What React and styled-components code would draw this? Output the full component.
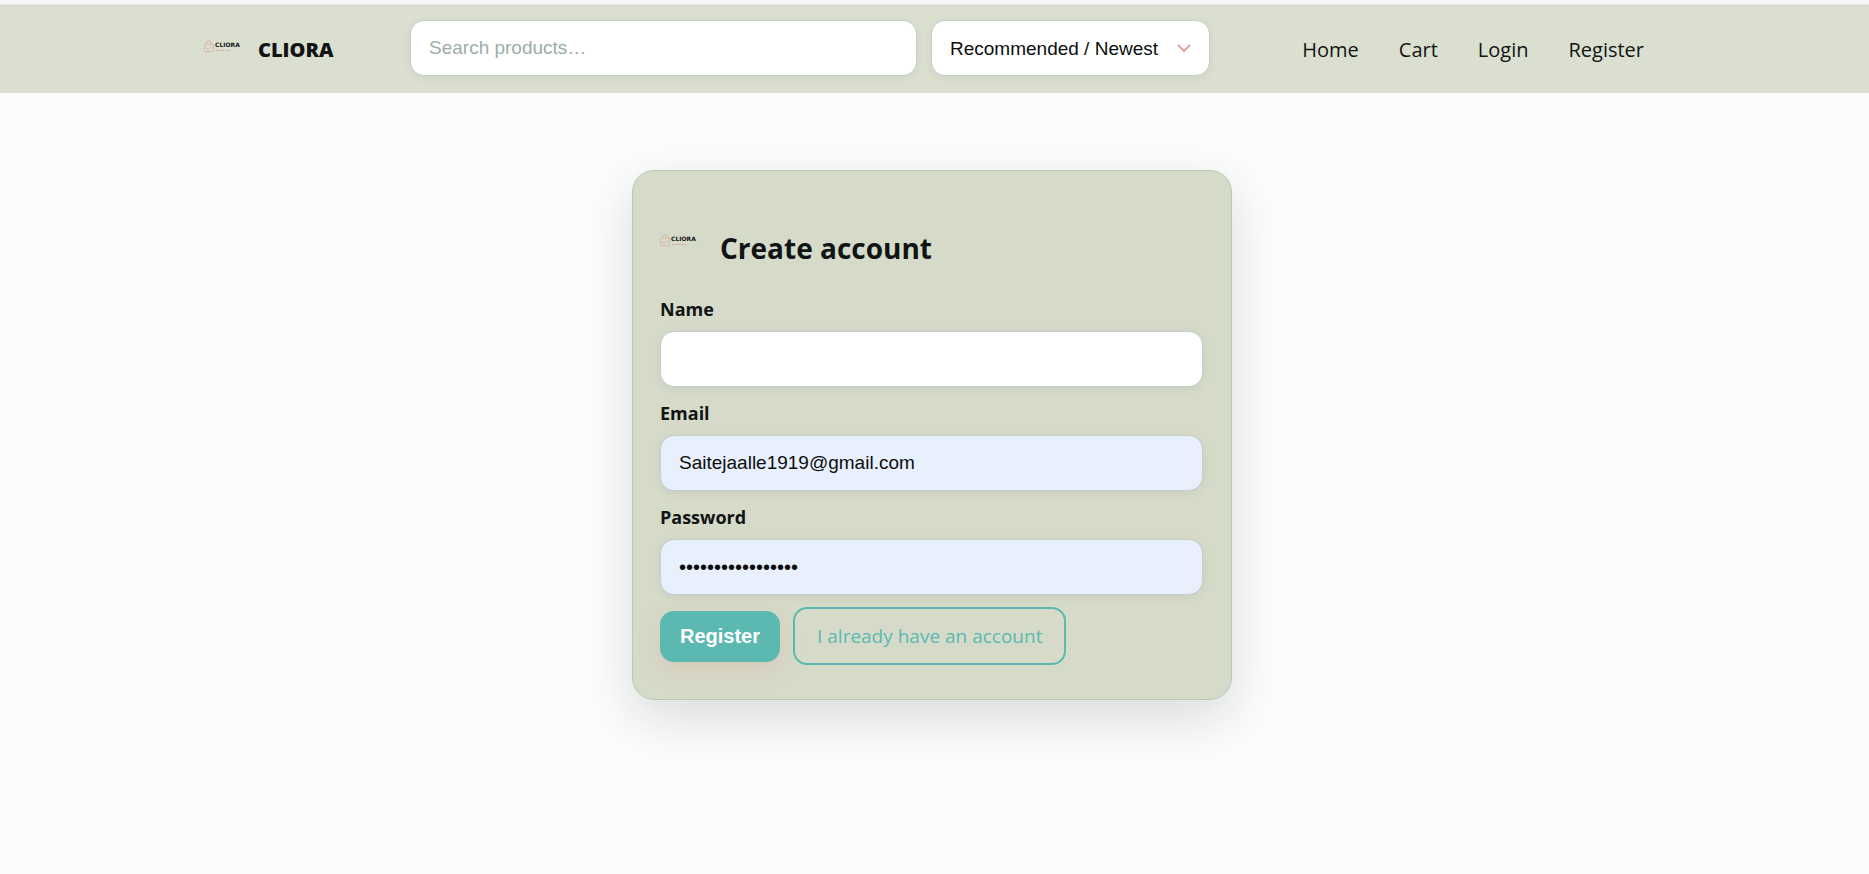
import React from 'react';
import styled, { createGlobalStyle, css } from 'styled-components';

const GlobalStyle = createGlobalStyle`
  *, *::before, *::after { box-sizing: border-box; }
  body {
    margin: 0;
    background: #fbfdfc;
    color: #111414;
    font-family: "Segoe UI", "Open Sans", "Noto Sans", sans-serif;
    font-size: 19px;
    line-height: 28px;
  }
`;

const Page = styled.div`
  min-height: 100vh;
  border-top: 4px solid #f5f6f6;
`;

const Header = styled.header`
  background: #dbdfd0;
  border-top: 1px solid #e6e7e4;
  padding: 15px 5px 17px 0;
`;

const HeaderInner = styled.div`
  display: flex;
  align-items: center;
  width: 100%;
  max-width: 1456px;
  margin: 0 auto;
`;

const Brand = styled.a`
  display: flex;
  align-items: flex-start;
  gap: 14px;
  width: 206px;
  padding-top: 4px;
  flex-shrink: 0;
  color: inherit;
  text-decoration: none;
  font-size: 20px;
  font-weight: 800;
`;

const LogoSvg = styled.svg`
  display: block;
  width: 40px;
  height: 12px;
  margin-top: 4px;
  flex-shrink: 0;
`;

const Filters = styled.form`
  display: flex;
  gap: 14px;
  width: 800px;
`;

const field = css`
  height: 56px;
  border: 1px solid #c3cdc9;
  border-radius: 14px;
  background: ${(p) => (p.$filled ? '#e8effd' : '#ffffff')};
  box-shadow: 0 2px 8px rgba(17, 20, 20, 0.06);
  font-family: "Liberation Sans", Arial, sans-serif;
  font-size: 19px;
  color: #0c0e0e;
  padding: 0 18px;
  outline: none;
`;

const TextField = styled.input`
  ${field}
  display: block;
  flex: 1;
  width: 100%;
  min-width: 0;
  &::placeholder { color: #9bada7; opacity: 1; }
  &[type="password"] { font-size: 20px; }
`;

const SelectWrap = styled.div`
  position: relative;
  width: 279px;
  flex-shrink: 0;
`;

const Select = styled.select`
  ${field}
  display: block;
  width: 100%;
  appearance: none;
`;

const Chevron = styled.svg`
  position: absolute;
  right: 19px;
  top: 24px;
  width: 14px;
  height: 9px;
  pointer-events: none;
`;

const Nav = styled.nav`
  display: flex;
  gap: 40px;
  margin-left: auto;
  padding: 4px 16px 0 0;
  font-size: 20px;
`;

const NavLink = styled.a`
  color: inherit;
  text-decoration: none;
`;

const Main = styled.main`
  padding: 77px 5px 48px 0;
`;

const Card = styled.form`
  width: 100%;
  max-width: 600px;
  margin: 0 auto;
  padding: 59px 28px 34px 27px;
  background: #d6dac9;
  border: 1px solid #bdc7bc;
  border-radius: 22px;
  box-shadow: 0 18px 50px rgba(17, 20, 20, 0.14);
`;

const CardHead = styled.div`
  display: flex;
  align-items: flex-start;
  gap: 20px;
  margin-bottom: 29px;
`;

const Title = styled.h1`
  margin: 0;
  font-size: 28px;
  line-height: 36px;
  font-weight: 700;
`;

const Field = styled.div`
  margin-bottom: 12px;
`;

const Label = styled.label`
  display: block;
  margin-bottom: 8px;
  font-size: 18px;
  font-weight: 700;
`;

const Actions = styled.div`
  display: flex;
  align-items: center;
  gap: 13px;
`;

const PrimaryButton = styled.button`
  height: 51px;
  padding: 0 20px;
  border: 0;
  border-radius: 14px;
  background: #5bb9b1;
  color: #ffffff;
  font-family: "Liberation Sans", Arial, sans-serif;
  font-size: 20px;
  font-weight: 700;
  box-shadow: 0 8px 20px rgba(222, 165, 150, 0.3);
`;

const OutlineLink = styled.a`
  display: flex;
  align-items: center;
  height: 58px;
  padding: 0 22px;
  border: 2px solid #5bb9b1;
  border-radius: 14px;
  color: #5bb9b1;
  text-decoration: none;
`;

function Logo() {
  return (
    <LogoSvg viewBox="0 0 40 12" aria-hidden="true">
      <g fill="none" stroke="#dcb5a8">
        <rect x="0.5" y="4" width="9" height="7.5" rx="1" />
        <path d="M2.5 4V3Q2.500 1 5 1T7.500 3V4M2.500 8l2 1.500L8 6" />
      </g>
      <text x="11" y="7" fontFamily="DejaVu Sans, sans-serif" fontSize="6" fontWeight="700" fill="#111414">CLIORA</text>
      <path d="M12 10.500h15" stroke="#dba99d" strokeDasharray="2 1" />
    </LogoSvg>
  );
}

export default function App() {
  return (
    <Page>
      <GlobalStyle />
      <Header>
        <HeaderInner>
          <Brand href="#home"><Logo />CLIORA</Brand>
          <Filters>
            <TextField type="search" aria-label="Search products" placeholder="Search products…" />
            <SelectWrap>
              <Select aria-label="Sort products">
                <option>Recommended / Newest</option>
              </Select>
              <Chevron viewBox="0 0 14 9" aria-hidden="true">
                <path d="M1 1l6 6 6-6" fill="none" stroke="#dba99d" strokeWidth="2" />
              </Chevron>
            </SelectWrap>
          </Filters>
          <Nav>
            <NavLink href="#home">Home</NavLink>
            <NavLink href="#cart">Cart</NavLink>
            <NavLink href="#login">Login</NavLink>
            <NavLink href="#register">Register</NavLink>
          </Nav>
        </HeaderInner>
      </Header>
      <Main>
        <Card>
          <CardHead>
            <Logo />
            <Title>Create account</Title>
          </CardHead>
          <Field>
            <Label htmlFor="name">Name</Label>
            <TextField id="name" type="text" />
          </Field>
          <Field>
            <Label htmlFor="email">Email</Label>
            <TextField id="email" type="email" $filled defaultValue="Saitejaalle1919@gmail.com" />
          </Field>
          <Field>
            <Label htmlFor="password">Password</Label>
            <TextField id="password" type="password" $filled defaultValue="passwordpassword1" />
          </Field>
          <Actions>
            <PrimaryButton type="button">Register</PrimaryButton>
            <OutlineLink href="#login">I already have an account</OutlineLink>
          </Actions>
        </Card>
      </Main>
    </Page>
  );
}
